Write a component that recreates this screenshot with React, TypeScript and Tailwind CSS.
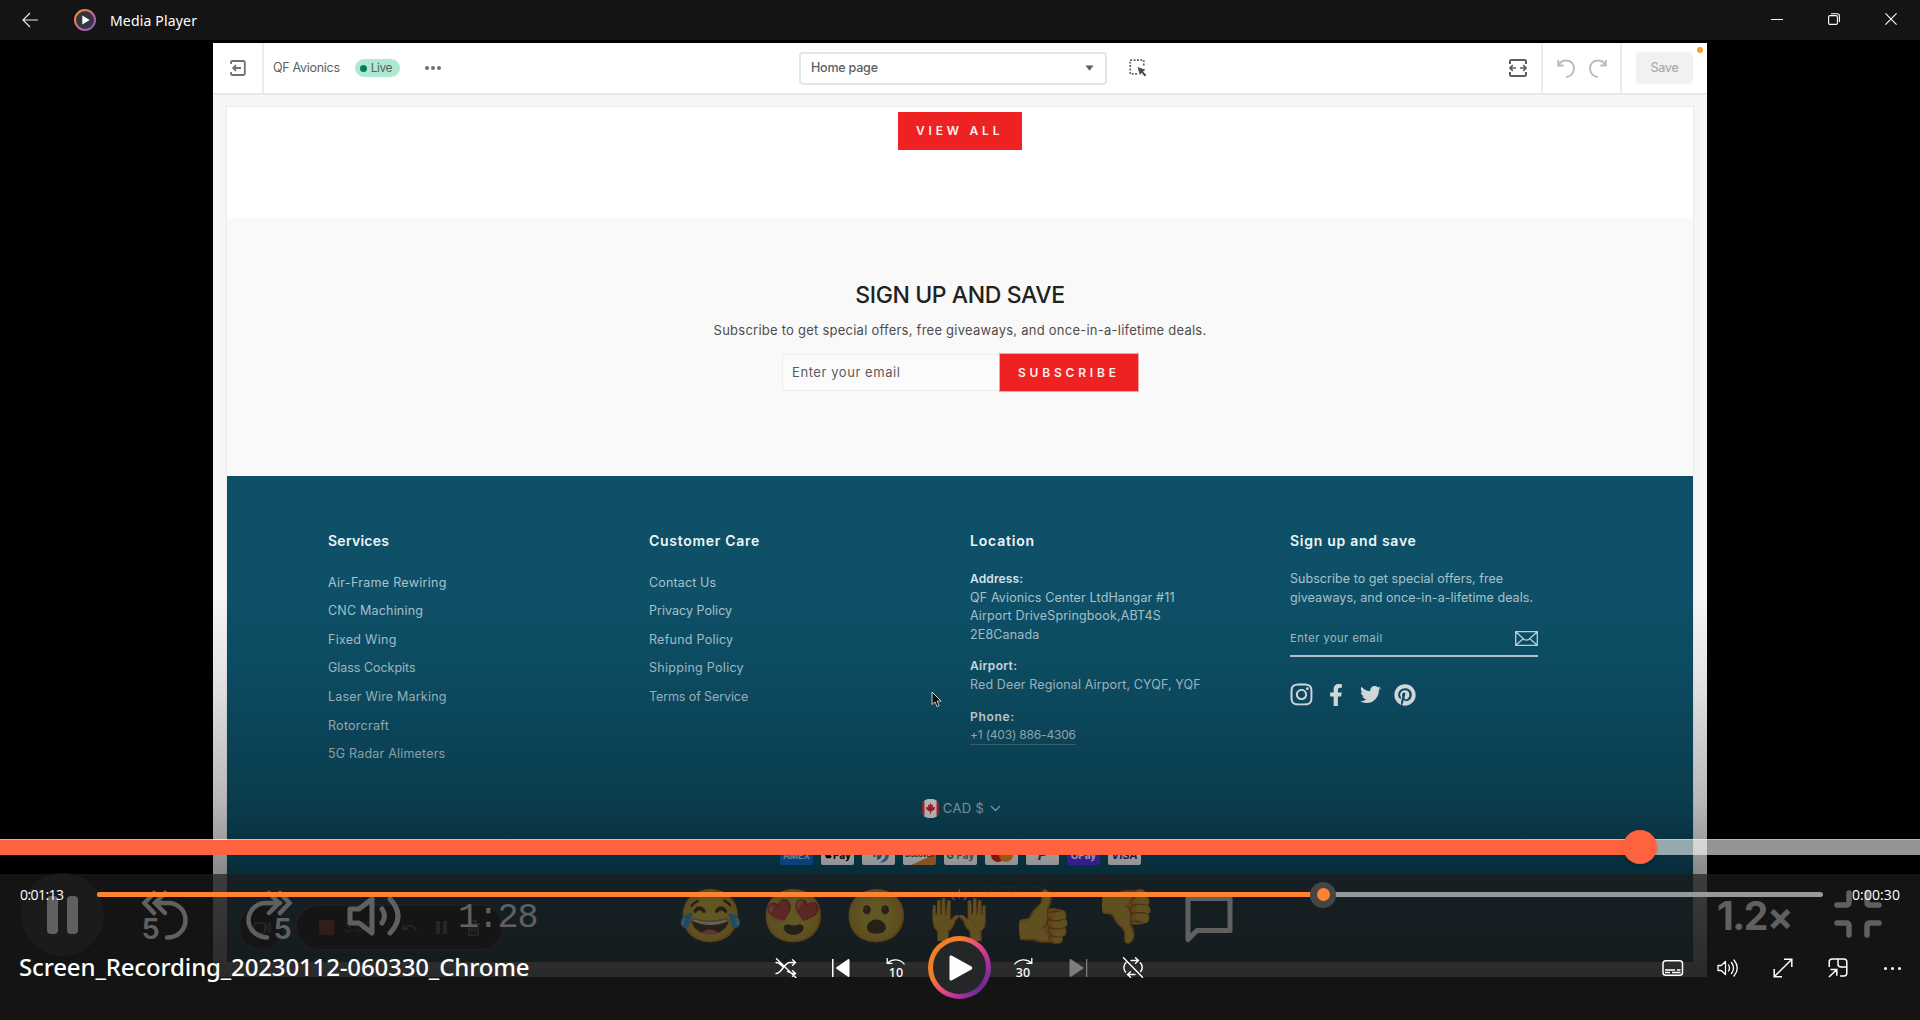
import type { ReactNode } from "react";
import { FaFacebookF, FaTwitter, FaPinterest, FaInstagram, FaApple } from "react-icons/fa";

type Item = [label: string, tracking: string];

const SERVICES: Item[] = [
  ["Air-Frame Rewiring", "tracking-[0.3px]"],
  ["CNC Machining", "tracking-[0.2px]"],
  ["Fixed Wing", "tracking-[0.28px]"],
  ["Glass Cockpits", "tracking-[-0.03px]"],
  ["Laser Wire Marking", "tracking-[0.2px]"],
  ["Rotorcraft", "tracking-[0.26px]"],
  ["5G Radar Alimeters", "tracking-[0.2px]"],
];

const CARE: Item[] = [
  ["Contact Us", "tracking-[0.14px]"],
  ["Privacy Policy", "tracking-[0.03px]"],
  ["Refund Policy", "tracking-[0.25px]"],
  ["Shipping Policy", "tracking-[0.28px]"],
  ["Terms of Service", "tracking-[-0.1px]"],
];

const REACTIONS = ["😂", "😍", "😮", "🙌", "👍", "👎"];

/* ---------- Window title bar ---------- */

function TitleBar() {
  return (
    <header className="flex h-10 items-center justify-between bg-[#141414] text-white">
      <div className="flex items-center">
        <svg className="ml-[22px]" width="17" height="16" viewBox="0 0 17 16" fill="none" stroke="#e6e6e6" strokeWidth="1.2">
          <path d="M16 8H1.2M8 1 1 8l7 7" />
        </svg>
        <svg className="ml-[35px]" width="22" height="22" viewBox="0 0 22 22">
          <defs>
            <linearGradient id="logoRing" x1="0" y1="0" x2="1" y2="1">
              <stop offset="0.1" stopColor="#f58a3c" />
              <stop offset="0.55" stopColor="#c9659a" />
              <stop offset="1" stopColor="#7a55c8" />
            </linearGradient>
          </defs>
          <circle cx="11" cy="11" r="10" fill="#33363c" stroke="url(#logoRing)" strokeWidth="2" />
          <path d="M8.3 6.4v9.2l7.4-4.6z" fill="#fff" />
        </svg>
        <span className="ml-[14px] font-['Noto_Sans'] text-[14px] tracking-[0.17px]">Media Player</span>
      </div>
      <div className="flex items-center pr-[23px] pb-[2px]">
        <svg width="12" height="12" viewBox="0 0 12 12" stroke="#fff" strokeWidth="1"><path d="M0 6.5h12" /></svg>
        <svg className="ml-[45px]" width="12" height="12" viewBox="0 0 12 12" fill="none" stroke="#fff" strokeWidth="1.1">
          <rect x="0.6" y="2.6" width="8.8" height="8.8" rx="1.4" />
          <path d="M3 .7h6.2a2.2 2.2 0 0 1 2.2 2.2V9" />
        </svg>
        <svg className="ml-[45px]" width="12" height="12" viewBox="0 0 12 12" stroke="#fff" strokeWidth="1.1">
          <path d="M.4.4l11.2 11.2M11.6.4.4 11.6" />
        </svg>
      </div>
    </header>
  );
}

/* ---------- Theme editor in the video ---------- */

function EditorBar() {
  return (
    <div className="flex h-[52px] shrink-0 border-b-2 border-[#e9e9eb] bg-white text-[12.5px] text-[#5c5f62]">
      <div className="flex w-[51px] items-center border-r-2 border-[#ececee] pl-[17px]">
        <svg width="16" height="16" viewBox="0 0 16 16" fill="none" stroke="#6d7175" strokeWidth="1.8">
          <path d="M1 4V2.2C1 1.5 1.4 1 2.2 1h11.3c.8 0 1.3.5 1.3 1.2v11.6c0 .7-.5 1.2-1.3 1.2H2.2C1.4 15 1 14.500 1 13.800V12" />
          <path d="M11 8H3.500M6 5.200 3.200 8 6 10.800" />
        </svg>
      </div>
      <div className="flex w-[535px] items-center pl-[9px]">
        <span className="tracking-[-0.29px]">QF Avionics</span>
        <span className="ml-[15px] flex h-[18px] w-[45px] items-center gap-[4px] rounded-full bg-[#aee9d1] pl-[5px] text-[12px] tracking-[-0.5px]">
          <i className="size-[7px] rounded-full bg-[#007f5f]" />
          Live
        </span>
        <span className="ml-[25px] flex gap-[2px]">
          <i className="size-[4px] rounded-full bg-[#6d7175]" />
          <i className="size-[4px] rounded-full bg-[#6d7175]" />
          <i className="size-[4px] rounded-full bg-[#6d7175]" />
        </span>
      </div>
      <div className="flex flex-1 items-center">
        <div className="flex h-[33px] w-[308px] items-center justify-between rounded-[4px] border-2 border-[#e4e5e8] pr-[11px] pl-[10px] font-medium">
          <span className="tracking-[-0.21px]">Home page</span>
          <svg width="9" height="6" viewBox="0 0 9 6"><path d="M.4.4h8.200L4.500 5.700z" fill="#5c5f62" /></svg>
        </div>
        <svg className="ml-[22px]" width="18" height="18" viewBox="0 0 18 18" fill="none">
          <path d="M1.200 1.200h13.600v13.600H1.200z" stroke="#5c5f62" strokeWidth="1.700" strokeDasharray="1.900 1.500" />
          <path d="M8 8h9v9H8z" fill="#fff" />
          <path d="m8.500 8 8 2.800-2.500 1.600 3.300 3.600-1.500 1.400-3.300-3.600-1.600 2.500z" fill="#4a4d50" />
        </svg>
        <svg className="mr-[14px] ml-auto" width="18" height="20" viewBox="0 0 18 20" fill="none" stroke="#5c5f62" strokeWidth="2">
          <path d="M1 6V3.200C1 2.300 1.500 2 2.200 2h13.600c.7 0 1.200.3 1.200 1.200V6M1 14v2.800c0 .9.500 1.200 1.200 1.200h13.600c.7 0 1.200-.3 1.200-1.200V14" />
          <path d="M1 10h6M11 10h6M3.800 7.200 1 10l2.800 2.800M14.200 7.200 17 10l-2.800 2.800" strokeWidth="1.700" />
        </svg>
      </div>
      <div className="flex w-[81px] items-center gap-[14px] border-x-2 border-[#ececee] pl-[14px]">
        {["", "-scale-x-100"].map((flip) => (
          <svg key={flip} className={flip} width="18" height="19" viewBox="0 0 18 19" fill="none" stroke="#b9bcbf" strokeWidth="1.900">
            <path d="M1.200 1v5.500h5.500M1.600 6.200C3 3 6 1.500 9.200 1.500c4.500 0 7.800 3.300 7.800 7.700 0 5-3.500 8.400-8 8.800" />
          </svg>
        ))}
      </div>
      <div className="flex w-[85px] items-start pt-[9px] pl-[14px]">
        <div className="flex h-[32px] w-[57px] items-center justify-center rounded-[4px] bg-[#f1f1f1] font-medium tracking-[-0.3px] text-[#a9acae]">
          Save
        </div>
        <i className="-mt-[5px] ml-[4px] size-[6px] shrink-0 rounded-full bg-[#f0a02c]" />
      </div>
    </div>
  );
}

function Newsletter() {
  return (
    <section className="flex h-[258px] flex-col items-center bg-[#f9f9f9]">
      <h2 className="mt-[60px] text-[23px]/[34px] font-medium tracking-[-0.4px] text-[#222]">SIGN UP AND SAVE</h2>
      <p className="mt-[8px] text-[13px]/[20px] tracking-[0.24px] text-[#4d4d4d]">
        Subscribe to get special offers, free giveaways, and once-in-a-lifetime deals.
      </p>
      <form className="mt-[14px] flex h-[37px]">
        <div className="flex w-[218px] items-center border border-r-0 border-[#ededed] bg-[#fbfbfb] pt-[1px] pl-[9px] text-[13px] tracking-[0.57px] text-[#5c5c5c]">
          Enter your email
        </div>
        <div className="flex w-[138px] items-center bg-[#ee2222] pl-[18px] text-[12px] font-semibold tracking-[3.800px] text-[#fff0f0] ring-1 ring-[#ee2222]/40">
          SUBSCRIBE
        </div>
      </form>
    </section>
  );
}

function LinkList({ title, tracking, items }: { title: string; tracking: string; items: Item[] }) {
  return (
    <div>
      <h3 className={`text-[14px]/[20px] font-semibold text-[#eef4f6] ${tracking}`}>{title}</h3>
      <ul className="mt-[17.600px]">
        {items.map(([label, t]) => (
          <li key={label} className={`text-[12.500px]/[28.600px] ${t}`}>{label}</li>
        ))}
      </ul>
    </div>
  );
}

function Envelope() {
  return (
    <svg width="23" height="15" viewBox="0 0 23 15" fill="none" stroke="#c5d5db" strokeWidth="1.300">
      <path d="M.700.700h21.600v13.600H.700zM.700.700l8 7.200c1.800 1.500 3.800 1.500 5.600 0l8-7.200M.700 14.300l7.500-6.500M22.300 14.300l-7.500-6.500" />
    </svg>
  );
}

function PayCard({ className, children }: { className: string; children?: ReactNode }) {
  return (
    <span className={`flex h-[21px] w-[33px] items-center justify-center overflow-hidden rounded-[2px] font-bold ${className}`}>
      {children}
    </span>
  );
}

function SiteFooter() {
  return (
    <footer className="flex h-[486px] flex-col items-center bg-[#0d5068] pt-[55px] text-[12.500px]/[18.600px] text-[#a9c2cb]">
      <div className="grid h-[267px] w-[1264px] grid-cols-[321px_321px_320px_248px] whitespace-nowrap">
        <LinkList title="Services" tracking="tracking-[0.25px]" items={SERVICES} />
        <LinkList title="Customer Care" tracking="tracking-[0.7px]" items={CARE} />
        <div>
          <h3 className="text-[14px]/[20px] font-semibold tracking-[0.800px] text-[#eef4f6]">Location</h3>
          <p className="mt-[19px] text-[12px] font-semibold tracking-[0.120px] text-[#d5e2e7]">Address:</p>
          <p className="tracking-[0.150px]">QF Avionics Center LtdHangar #11<br />Airport DriveSpringbook,ABT4S<br />2E8Canada</p>
          <p className="mt-[13px] text-[12px] font-semibold tracking-[0.340px] text-[#d5e2e7]">Airport:</p>
          <p className="tracking-[0.130px]">Red Deer Regional Airport, CYQF, YQF</p>
          <p className="mt-[13px] text-[12px] font-semibold tracking-[0.670px] text-[#d5e2e7]">Phone:</p>
          <p className="w-fit border-b border-[#3f7487] text-[12px]/[18px] tracking-[-0.190px]">+1 (403) 886-4306</p>
        </div>
        <div>
          <h3 className="text-[14px]/[20px] font-semibold tracking-[0.720px] text-[#eef4f6]">Sign up and save</h3>
          <p className="mt-[19px] tracking-[0.050px]">Subscribe to get special offers, free<br />giveaways, and once-in-a-lifetime deals.</p>
          <div className="mt-[18px] flex h-[32px] items-start justify-between border-b-2 border-[#b9ccd4] pt-[4px] text-[11px]">
            <span className="tracking-[0.530px]">Enter your email</span>
            <span className="pt-[2px]"><Envelope /></span>
          </div>
          <div className="mt-[25px] flex items-center text-[#e8eef0]">
            <FaInstagram className="-ml-[1px] size-[25px]" />
            <FaFacebookF className="ml-[11px] size-[22px]" />
            <FaTwitter className="ml-[13px] size-[21px]" />
            <FaPinterest className="ml-[13px] size-[22px]" />
          </div>
        </div>
      </div>
      <div className="flex h-[20px] items-center pl-[3px] text-[13px] tracking-[0.350px]">
        <svg width="17" height="19" viewBox="0 0 17 19">
          <rect x="0.500" width="16" height="19" rx="6" fill="#f3f3f3" />
          <path d="M2.500 2v15A6 6 0 0 1 0 13V6a6 6 0 0 1 2.500-4zM14.500 2v15A6 6 0 0 0 17 13V6a6 6 0 0 0-2.500-4z" fill="#d22c3a" />
          <path d="m8.500 4 1.300 2.300 1.300-.500-.400 2.700 2.400-.700-.600 2.600-3 2.100h-.600V15h-.800v-2.500h-.600l-3-2.100-.600-2.600 2.400.700-.400-2.700 1.300.500z" fill="#d22c3a" />
        </svg>
        <span className="ml-[4px]">CAD $</span>
        <svg className="ml-[6px]" width="11" height="7" viewBox="0 0 11 7" fill="none" stroke="#a9c2cb" strokeWidth="1.400"><path d="m1 1 4.500 4.500L10 1" /></svg>
      </div>
      <div className="mt-[26px] flex gap-[8px] pl-[1px]">
        <PayCard className="items-end bg-[#0f6fd0] pb-[3px] text-[9px]/[12px] text-[#bcd8f2]">AMEX</PayCard>
        <PayCard className="bg-white text-[10px]/[16px] text-black"><FaApple className="size-[9px]" />Pay</PayCard>
        <PayCard className="bg-white">
          <svg width="20" height="17" viewBox="0 0 20 17"><circle cx="12" cy="8.500" r="8" fill="#3a93c4" /><circle cx="8.500" cy="8.500" r="7.500" fill="#fff" stroke="#fff" strokeWidth="1" /><path d="M5.500 5v6M9 3v9.500q3-1 3-5" fill="none" stroke="#3a83bb" strokeWidth="2.200" /></svg>
        </PayCard>
        <PayCard className="bg-[linear-gradient(155deg,#ffffff_68%,#ee8833_69%)] text-[5.500px]/[12px] text-[#333]">DISCOVER</PayCard>
        <PayCard className="bg-white text-[10px]/[16px] text-[#777]"><span><b className="text-[#3a9a5a]">G</b> Pay</span></PayCard>
        <PayCard className="bg-white">
          <i className="size-[14px] rounded-full bg-[#e02020]" /><i className="-ml-[6px] size-[14px] rounded-full bg-[#f59a1b]" />
        </PayCard>
        <PayCard className="bg-white text-[15px]/[18px] text-[#1d56a8] italic">P</PayCard>
        <PayCard className="bg-[#5a31f4] text-[10px]/[16px] text-white">OPay</PayCard>
        <PayCard className="bg-white text-[11px]/[16px] text-[#2b3090] italic">VISA</PayCard>
      </div>
      <p className="mt-[17px] text-[11px] tracking-[0.600px] text-[#6e97a6]/60">© Q.F. AVIONICS CENTER LTD</p>
    </footer>
  );
}

function Recording() {
  return (
    <div className="relative flex h-[934px] w-[1494px] flex-col overflow-hidden bg-[#f6f6f8] font-['Inter']">
      <EditorBar />
      <main className="mx-[14px] mt-[12px] ring-1 ring-[#ebebed]">
        <div className="flex h-[111px] justify-center bg-white pt-[5px]">
          <div className="flex h-[38px] w-[124px] items-center bg-[#ee2222] pl-[18px] text-[12px] font-semibold tracking-[3.800px] text-[#fff0f0]">
            VIEW ALL
          </div>
        </div>
        <Newsletter />
        <SiteFooter />
      </main>
      <svg className="absolute top-[648px] left-[718px]" width="11" height="17" viewBox="0 0 11 17">
        <path d="M1 1v12.500l3-2.600 2 4.800 2.200-.9-2-4.700h3.900z" fill="#111" stroke="#dfe5e8" strokeWidth="1" />
      </svg>
      <RecorderPill />
      <div className="absolute inset-0 bg-[linear-gradient(to_bottom,transparent_59%,rgba(0,0,0,0.08)_68%,rgba(0,0,0,0.25)_81%,rgba(0,0,0,0.47)_90%,rgba(0,0,0,0.7)_100%)]" />
    </div>
  );
}

function RecorderPill() {
  return (
    <div className="absolute bottom-[26px] left-[25px] flex gap-[10px] text-[#8a8a8a]">
      <div className="flex size-[47px] items-center justify-center rounded-full border-2 border-[#2c5a6a] bg-[#0c0c0c]">
        <svg width="18" height="12" viewBox="0 0 18 12" fill="none" stroke="#777" strokeWidth="2"><rect x="1" y="1" width="11" height="10" rx="2" /><path d="m12 6 5-4v8z" /></svg>
      </div>
      <div className="flex h-[47px] w-[209px] items-center rounded-full border-2 border-[#2c5a6a] bg-[#0c0c0c] pl-[22px]">
        <i className="size-[15px] rounded-[2px] bg-[#e8502c]" />
        <span className="ml-[10px] text-[13px]">3:00</span>
        <svg className="ml-[30px]" width="16" height="10" viewBox="0 0 16 10" fill="none" stroke="#888" strokeWidth="1.800"><path d="M1 1v5h5M1.500 5.500C5 1.500 12 1.500 14.500 8" /></svg>
        <i className="ml-[18px] h-[13px] w-[4px] bg-[#999]" /><i className="ml-[3px] h-[13px] w-[4px] bg-[#999]" />
        <svg className="ml-[20px]" width="13" height="16" viewBox="0 0 13 16" fill="none" stroke="#999" strokeWidth="1.800"><path d="M0 4h13M4 4V1h5v3M2 4v11h9V4M5 7v5M8 7v5" /></svg>
      </div>
    </div>
  );
}

/* ---------- Player captured inside the recording ---------- */

function SkipFive({ forward }: { forward?: boolean }) {
  return (
    <svg className="overflow-visible" width="46" height="49" viewBox="0 0 46 49" fill="none" stroke="#fff" strokeWidth="4.500" strokeLinecap="round">
      {forward ? (
        <>
          <path d="M21 46.500C10 46 2.500 38 2.500 29S10 12 20 12h14M23 2l10 10-10 10M34 2l9.500 10L34 22" />
          <text x="27.500" y="48" fontSize="29" fontWeight="600" fontFamily="Inter" fill="#fff" stroke="none">5</text>
        </>
      ) : (
        <>
          <path d="M25 46.500c11 0 18.500-8 18.500-17.500S36 12 26 12H13M23 2 13 12l10 10M12 2 2.500 12 12 22" />
          <text x="-0.500" y="48" fontSize="29" fontWeight="600" fontFamily="Inter" fill="#fff" stroke="none">5</text>
        </>
      )}
    </svg>
  );
}

function InnerPlayer() {
  return (
    <div className="absolute inset-x-0 top-[839px] h-[120px]">
      <div className="relative flex h-[16px] items-center border-t border-white/35 bg-white/[0.580]">
        <div className="h-[15px] w-[1640px] bg-[#ff623e]" />
        <i className="absolute -top-[10px] left-[1623px] size-[34px] rounded-full bg-[#ff623e] shadow-md" />
      </div>
      <div className="relative flex h-[85px] items-center text-white">
        <div className="mt-[34px] ml-[21px] flex size-[83px] shrink-0 items-center justify-center gap-[9px] rounded-full bg-white/10">
          <i className="h-[38px] w-[11px] rounded-[4px] bg-white" />
          <i className="h-[38px] w-[11px] rounded-[4px] bg-white" />
        </div>
        <div className="mt-[35px] ml-[38px] flex items-center">
          <SkipFive />
          <span className="ml-[58px]"><SkipFive forward /></span>
          <svg className="mt-[2px] ml-[55px]" width="54" height="40" viewBox="0 0 54 40" fill="none" stroke="#fff" strokeWidth="5" strokeLinecap="round" strokeLinejoin="round">
            <path d="M3 13v14h9l13 10V3L12 13z" /><path d="M35 13q5 7 0 14M43 3q16 17 0 34" />
          </svg>
          <span className="mt-[5px] ml-[57px] font-['Liberation_Mono'] text-[35px]/[40px] tracking-[-1.200px]">1:28</span>
        </div>
        <div className="absolute top-[25px] left-[669px] flex">
          {REACTIONS.map((emoji) => (
            <span key={emoji} className="w-[83px] text-center text-[52px]/[68px]">{emoji}</span>
          ))}
          <svg className="mt-[15px] ml-[18px]" width="48" height="48" viewBox="0 0 48 48" fill="none" stroke="#fff" strokeWidth="5" strokeLinejoin="round">
            <path d="M3 3.500h42v32H12l-9 9z" />
          </svg>
        </div>
        <span className="absolute top-[38px] left-[1717px] font-['Inter'] text-[39px]/[46px] font-bold tracking-[-1.500px]">1.2×</span>
        <svg className="absolute top-[35px] left-[1834px]" width="48" height="49" viewBox="0 0 48 49" fill="none" stroke="#fff" strokeWidth="5.500" strokeLinecap="round">
          <path d="M3 15h9q3 0 3-3V3M45 15h-9q-3 0-3-3V3M3 33h9q3 0 3 3v9M45 33h-9q-3 0-3 3v9" />
        </svg>
      </div>
    </div>
  );
}

/* ---------- Media Player transport controls ---------- */

function Skip({ amount, forward }: { amount: string; forward?: boolean }) {
  return (
    <svg className="overflow-visible" width="20" height="20" viewBox="0 0 20 20" fill="none" stroke="#fff" strokeWidth="1.300">
      <g transform={forward ? "translate(20 0) scale(-1 1)" : undefined}>
        <path d="M1.200 0v5.300h5.300M1.500 5C6 .5 14.500.5 18.500 6.500" />
      </g>
      <text x="10" y="18.500" textAnchor="middle" fontSize="12.500" fontWeight="500" fontFamily="Noto Sans" fill="#fff" stroke="none">{amount}</text>
    </svg>
  );
}

function Transport() {
  return (
    <div className="absolute bottom-[21px] left-[775px] flex h-[63px] items-center">
      <svg width="22" height="20" viewBox="0 0 22 20" fill="none" stroke="#fff" strokeWidth="1.400" strokeLinecap="round">
        <path d="M1 4.500c3.500 0 5.500 2.500 7.500 5M12.500 13.500c2 1.300 4 2 7.500 2M1 15.500c6 0 8-11 14-11h5M17.500 1.800l3 2.700-3 2.700M17.500 12.800l3 2.700-3 2.700M1.500.700l19.500 19" />
      </svg>
      <svg className="ml-[35px]" width="19" height="18" viewBox="0 0 19 18" fill="#fff"><path d="M0 0h1.500v18H0zM17.500 1v16c0 .900-.900 1.200-1.500.700L4.500 9.700c-.600-.500-.600-1 0-1.400L16 .300c.600-.500 1.500-.200 1.500.700z" /></svg>
      <span className="ml-[35px]"><Skip amount="10" /></span>
      <span className="ml-[22px] flex size-[63px] rounded-full bg-[conic-gradient(#f07f28_0deg,#e8517a_35deg,#c2329a_65deg,#8a2f9a_100deg,#6a2c8a_130deg,#8a2f9a_165deg,#c2329a_190deg,#e8517a_220deg,#f07f28_250deg,#f07f28_360deg)] p-[5px]">
        <span className="flex size-[53px] items-center justify-center rounded-full bg-[#242628]">
          <svg className="ml-[2px]" width="24" height="26" viewBox="0 0 24 26"><path d="M.500 2v22c0 1.500 1.200 2 2.500 1.200L22.500 14.500c1-.700 1-2.300 0-3L3 .800C1.700 0 .500.500.500 2z" fill="#fff" /></svg>
        </span>
      </span>
      <span className="ml-[22px]"><Skip amount="30" forward /></span>
      <svg className="ml-[36px]" width="19" height="18" viewBox="0 0 19 18" fill="#7d7d7d"><path d="M17 0h1.300v18H17zM.500 1v16c0 .900.900 1.200 1.500.700l12-8c.600-.500.600-1 0-1.400L2 .300C1.400-.200.500.100.500 1z" /></svg>
      <svg className="ml-[34px]" width="22" height="21" viewBox="0 0 22 21" fill="none" stroke="#fff" strokeWidth="1.400" strokeLinecap="round">
        <path d="M9 3.500h7M13.500.800l3 2.700-3 2.700M4 5.500a7 7 0 0 0-.5 9.500M13 17.500H6M8.500 14.800l-3 2.700 3 2.700M18.300 5.800a7 7 0 0 1 .4 8.700M1.500.700 20.500 20.300" />
      </svg>
    </div>
  );
}

function SideControls() {
  return (
    <div className="absolute right-[19px] bottom-[42px] flex h-[20px] items-center">
      <svg width="22" height="16" viewBox="0 0 22 16" fill="none" stroke="#fff" strokeWidth="1.500">
        <rect x="1" y="0.800" width="19.500" height="14.400" rx="2.800" />
        <path d="M3 10h10M15 10h3.500M3 12.500h5M10 12.500h8.500" strokeWidth="1.300" />
      </svg>
      <svg className="ml-[33px]" width="22" height="18" viewBox="0 0 22 18" fill="none" stroke="#fff" strokeWidth="1.300" strokeLinecap="round" strokeLinejoin="round">
        <path d="M1 6.500v5h3.200l4.300 4V2.500l-4.300 4zM11.500 6q2 3 0 6M14.500 3.500q4 5.500 0 11M17 1q6.500 8 0 16" />
      </svg>
      <svg className="ml-[34px]" width="20" height="20" viewBox="0 0 20 20" fill="none" stroke="#fff" strokeWidth="1.500"><path d="M11 1.200h7.800V9M18.800 1.200 1.200 18.800M1.200 11v7.800H9" /></svg>
      <svg className="ml-[35px]" width="20" height="20" viewBox="0 0 20 20" fill="none" stroke="#fff" strokeWidth="1.500">
        <path d="M1.200 9V4q0-3 3-3H16q2.800 0 2.800 3v11q0 3-2.800 3h-4M10 1v5q0 3 3 3h5.500M2.500 11.500h6.300v6.300M8.800 11.500 1 19" />
      </svg>
      <span className="ml-[36px] flex w-[17px] justify-between">
        <i className="size-[3px] rounded-full bg-white" /><i className="size-[3px] rounded-full bg-white" /><i className="size-[3px] rounded-full bg-white" />
      </span>
    </div>
  );
}

function ControlPanel() {
  return (
    <div className="absolute inset-x-0 bottom-0 h-[146px] bg-[#1d1d1d]/[0.700] text-white">
      <div className="flex h-[41px] items-center">
        <span className="w-[77px] pl-[20px] font-['Open_Sans'] text-[14px] tracking-[-0.570px]">0:01:13</span>
        <div className="relative ml-[20px] flex h-[5px] w-[1726px] items-center rounded-full bg-[#959a9a]">
          <div className="h-[5px] w-[1226px] rounded-full bg-[#ff8230]" />
          <span className="absolute left-[1213px] flex size-[26px] items-center justify-center rounded-full bg-[#454545]">
            <i className="size-[13px] rounded-full bg-[#ff8230]" />
          </span>
        </div>
        <span className="ml-[29px] font-['Open_Sans'] text-[14px] tracking-[0.100px]">0:00:30</span>
      </div>
      <h1 className="mt-[35px] ml-[19px] w-fit font-['Noto_Sans'] text-[24px]/[34px] font-medium tracking-[-0.140px]">
        Screen_Recording_20230112-060330_Chrome
      </h1>
      <Transport />
      <SideControls />
    </div>
  );
}

export default function App() {
  return (
    <div className="relative flex h-[1020px] w-[1920px] flex-col overflow-hidden bg-black">
      <TitleBar />
      <div className="flex flex-1 justify-center pt-[3px]">
        <Recording />
      </div>
      <InnerPlayer />
      <ControlPanel />
    </div>
  );
}
